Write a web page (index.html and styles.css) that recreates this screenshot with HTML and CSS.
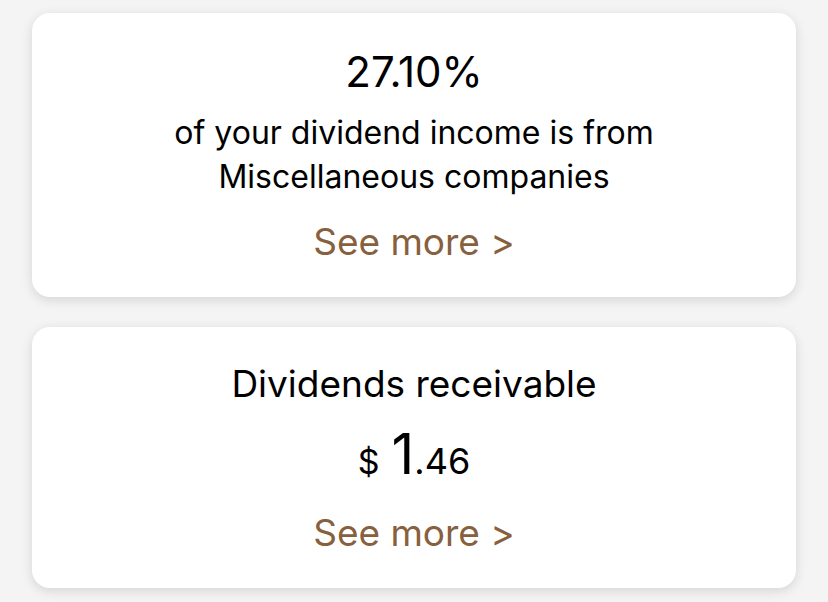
FILE: index.html
```html
<!DOCTYPE html>
<html lang="en">
<head>
  <meta charset="UTF-8" />
  <meta name="viewport" content="width=device-width, initial-scale=1" />
  <title>Dividends</title>
  <link rel="stylesheet" href="styles.css">
</head>
<body>
  <!-- Setor -->
  <div class="card card-setor">
    <p class="percent">27.10%</p>
    <p class="desc">of your dividend income is from<br>Miscellaneous companies</p>
    <a href="#" class="see-more">See more &gt;</a>
  </div>

  <!-- A receber -->
  <div class="card card-receber">
    <p class="title">Dividends receivable</p>
    <p class="amount"><span class="cur">$</span><span class="int">1</span><span class="dec">.46</span></p>
    <a href="#" class="see-more">See more &gt;</a>
  </div>
</body>
</html>
```

FILE: styles.css
```css
* {
  margin: 0;
  padding: 0;
  box-sizing: border-box;
}
body {
  font-family: Inter, "Liberation Sans", Arial, sans-serif;
  background: #f4f4f4;
  color: #000;
  padding: 13px 32px;
  display: flex;
  flex-direction: column;
  gap: 30px;
  min-height: 100vh;
}
.card {
  background: #fff;
  border-radius: 18px;
  box-shadow: 0 3px 12px rgb(0 0 0 / 0.13);
  text-align: center;
  display: flex;
  flex-direction: column;
  align-items: center;
}
.card-setor {
  height: 284px;
  padding-top: 35px;
}
.card-receber {
  height: 261px;
  padding-top: 35px;
}
.percent {
  font-size: 42px;
  line-height: 48px;
  margin-bottom: 15px;
}
.desc {
  font-size: 32px;
  line-height: 44px;
  margin-bottom: 21px;
}
.title {
  font-size: 37px;
  line-height: 44px;
  margin-bottom: 20px;
}
.amount {
  display: flex;
  align-items: baseline;
  line-height: 1;
  margin-bottom: 29px;
}
.amount .cur {
  font-size: 34px;
  margin-right: 12px;
}
.amount .int {
  font-size: 56px;
}
.amount .dec {
  font-size: 36px;
}
.see-more {
  font-size: 37px;
  line-height: 44px;
  color: #87603d;
  text-decoration: none;
}
```
